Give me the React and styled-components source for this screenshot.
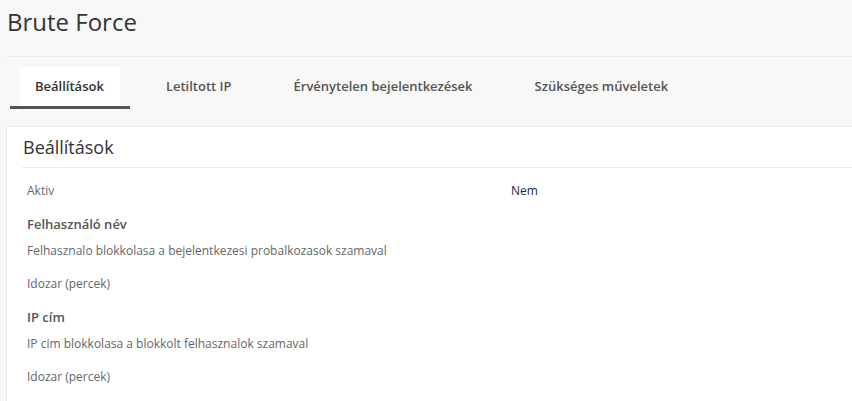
import React from "react";
import styled, { createGlobalStyle } from "styled-components";

const Global = createGlobalStyle`
  html, body { margin: 0; padding: 0; background: #f8f8f8; }
  body { font-family: "Open Sans", "Liberation Sans", sans-serif; color: #333; overflow: hidden; }
  * { box-sizing: border-box; }
`;

const Page = styled.div`
  padding-left: 6px;
  width: 900px;
`;

const Header = styled.div`
  padding: 4px 0 16px;
  border-bottom: 1px solid #ebebeb;
`;

const Title = styled.h1`
  margin: 0;
  font-size: 24px;
  line-height: 36px;
  font-weight: 400;
  color: #333;
  padding-left: 1px;
`;

const Tabs = styled.ul`
  list-style: none;
  margin: 10px 0 0;
  padding: 0 0 0 4px;
  display: flex;
  gap: 11px;
`;

const Tab = styled.li`
  padding: 0 10px;
  border-bottom: 3px solid ${(p) => (p.$active ? "#555" : "transparent")};
`;

const TabLink = styled.span`
  display: block;
  height: 39px;
  line-height: 39px;
  padding: 0 16px 0 15px;
  font-size: 13px;
  font-weight: 600;
  color: ${(p) => (p.$active ? "#333" : "#555")};
  background: ${(p) => (p.$active ? "#fff" : "transparent")};
`;

const Card = styled.div`
  margin-top: 17px;
  background: #fff;
  border: 1px solid #ebebeb;
  border-right: none;
  padding: 0 0 0 15px;
  height: 300px;
`;

const CardHeader = styled.div`
  border-bottom: 1px solid #ebebeb;
  height: 41px;
  display: flex;
  align-items: center;
`;

const CardTitle = styled.h2`
  margin: 0;
  padding-left: 1px;
  font-size: 18px;
  font-weight: 400;
  color: #333;
`;

const Body = styled.div`
  padding-top: 6px;
`;

const Row = styled.div`
  display: grid;
  grid-template-columns: 484px 1fr;
  align-items: center;
  height: 33px;
  padding-left: 5px;
  font-size: 12px;
  color: #666;
`;

const Value = styled.span`
  color: #1a2a4a;
`;

const Section = styled.div`
  padding: 7px 0 0 5px;
  line-height: 20px;
  font-size: 13px;
  font-weight: 600;
  color: #555;
`;

const tabs = ["Beállítások", "Letiltott IP", "Érvénytelen bejelentkezések", "Szükséges műveletek"];

export default function App() {
  return (
    <Page>
      <Global />
      <Header>
        <Title>Brute Force</Title>
      </Header>
      <Tabs>
        {tabs.map((t, i) => (
          <Tab key={t} $active={i === 0}>
            <TabLink $active={i === 0}>{t}</TabLink>
          </Tab>
        ))}
      </Tabs>
      <Card>
        <CardHeader>
          <CardTitle>Beállítások</CardTitle>
        </CardHeader>
        <Body>
          <Row>
            <span>Aktiv</span>
            <Value>Nem</Value>
          </Row>
          <Section>Felhasználó név</Section>
          <Row>Felhasznalo blokkolasa a bejelentkezesi probalkozasok szamaval</Row>
          <Row>Idozar (percek)</Row>
          <Section>IP cím</Section>
          <Row>IP cim blokkolasa a blokkolt felhasznalok szamaval</Row>
          <Row>Idozar (percek)</Row>
        </Body>
      </Card>
    </Page>
  );
}
